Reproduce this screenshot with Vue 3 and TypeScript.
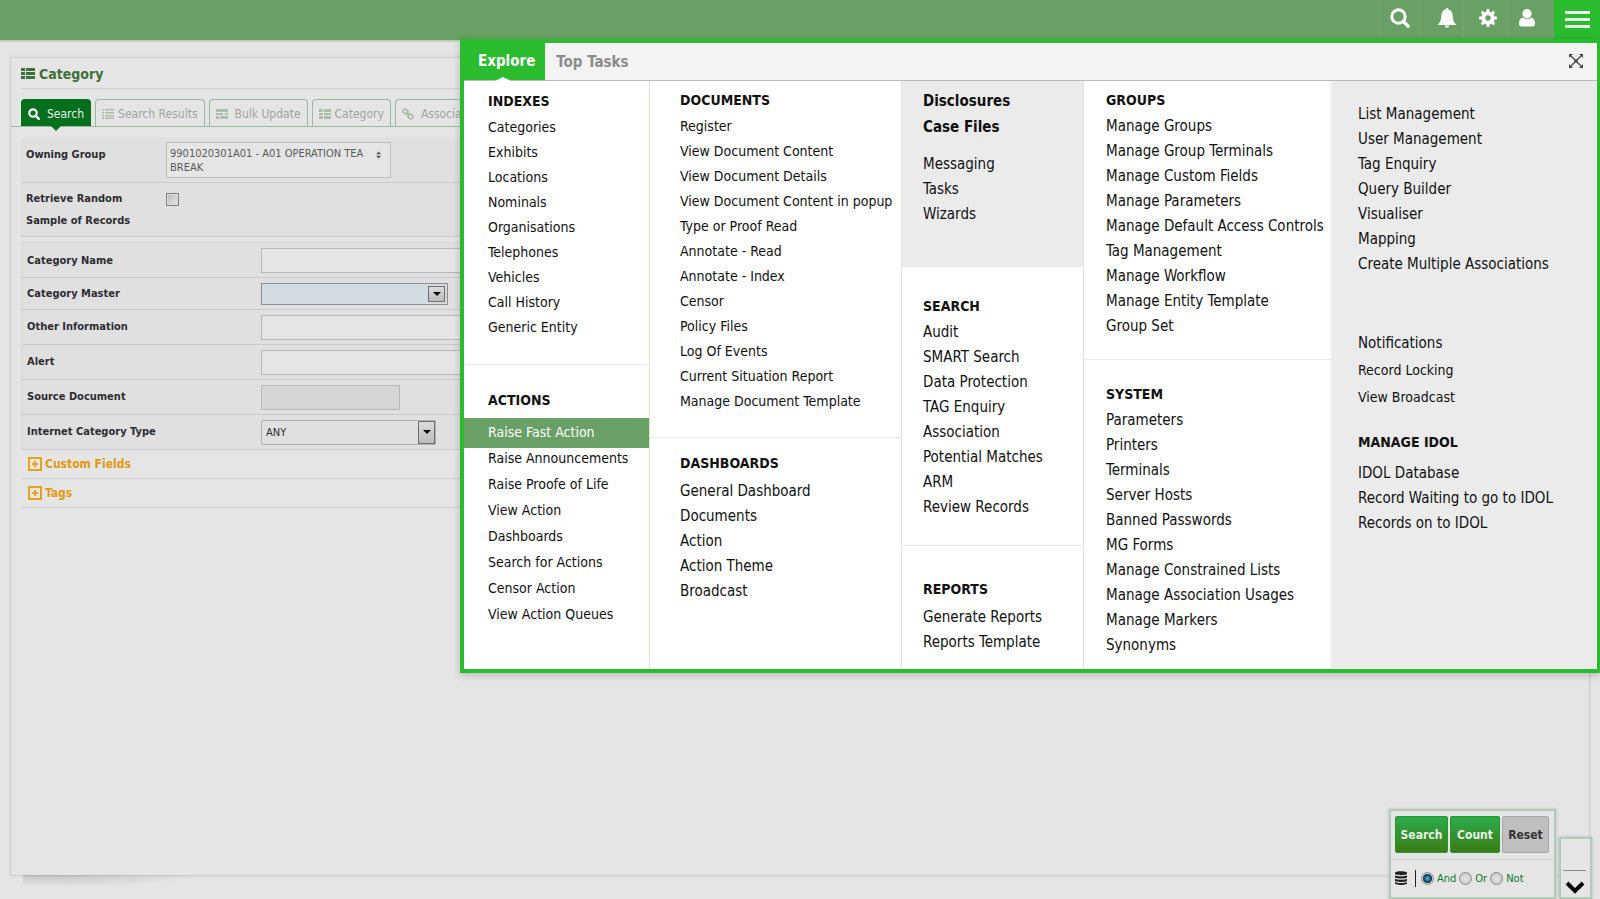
<script setup lang="ts">
import { ref } from 'vue'

interface Section {
  key: string
  title?: string
  items: string[]
}

const columns: { key: string; sections: Section[] }[] = [
  {
    key: 'one',
    sections: [
      {
        key: 'indexes',
        title: 'INDEXES',
        items: ['Categories', 'Exhibits', 'Locations', 'Nominals', 'Organisations', 'Telephones', 'Vehicles', 'Call History', 'Generic Entity'],
      },
      {
        key: 'actions',
        title: 'ACTIONS',
        items: ['Raise Fast Action', 'Raise Announcements', 'Raise Proofe of Life', 'View Action', 'Dashboards', 'Search for Actions', 'Censor Action', 'View Action Queues'],
      },
    ],
  },
  {
    key: 'two',
    sections: [
      {
        key: 'documents',
        title: 'DOCUMENTS',
        items: ['Register', 'View Document Content', 'View Document Details', 'View Document Content in popup', 'Type or Proof Read', 'Annotate - Read', 'Annotate - Index', 'Censor', 'Policy Files', 'Log Of Events', 'Current Situation Report', 'Manage Document Template'],
      },
      {
        key: 'dashboards',
        title: 'DASHBOARDS',
        items: ['General Dashboard', 'Documents', 'Action', 'Action Theme', 'Broadcast'],
      },
    ],
  },
  {
    key: 'three',
    sections: [
      { key: 'featured', items: ['Disclosures', 'Case Files', 'Messaging', 'Tasks', 'Wizards'] },
      {
        key: 'search',
        title: 'SEARCH',
        items: ['Audit', 'SMART Search', 'Data Protection', 'TAG Enquiry', 'Association', 'Potential Matches', 'ARM', 'Review Records'],
      },
      { key: 'reports', title: 'REPORTS', items: ['Generate Reports', 'Reports Template'] },
    ],
  },
  {
    key: 'four',
    sections: [
      {
        key: 'groups',
        title: 'GROUPS',
        items: ['Manage Groups', 'Manage Group Terminals', 'Manage Custom Fields', 'Manage Parameters', 'Manage Default Access Controls', 'Tag Management', 'Manage Workflow', 'Manage Entity Template', 'Group Set'],
      },
      {
        key: 'system',
        title: 'SYSTEM',
        items: ['Parameters', 'Printers', 'Terminals', 'Server Hosts', 'Banned Passwords', 'MG Forms', 'Manage Constrained Lists', 'Manage Association Usages', 'Manage Markers', 'Synonyms'],
      },
    ],
  },
  {
    key: 'five',
    sections: [
      {
        key: 'management',
        items: ['List Management', 'User Management', 'Tag Enquiry', 'Query Builder', 'Visualiser', 'Mapping', 'Create Multiple Associations'],
      },
      { key: 'notices', items: ['Notifications', 'Record Locking', 'View Broadcast'] },
      { key: 'idol', title: 'MANAGE IDOL', items: ['IDOL Database', 'Record Waiting to go to IDOL', 'Records on to IDOL'] },
    ],
  },
]

const activeItem = ref('Raise Fast Action')
const operator = ref('And')
const operators = ['And', 'Or', 'Not']
const randomSample = ref(false)
const categoryName = ref('')
const categoryMaster = ref('')
const otherInformation = ref('')
const alertText = ref('')
const sourceDocument = ref('')
const categoryType = ref('ANY')
</script>

<template>
  <div class="page">
    <header class="topbar">
      <button class="tool search-tool" type="button" aria-label="Search">
        <svg width="20" height="20" viewBox="0 0 20 20"><circle cx="8.5" cy="8.5" r="6.7" fill="none" stroke="#fff" stroke-width="3" /><path d="M13.5 13.5l4.7 4.7" stroke="#fff" stroke-width="3.4" stroke-linecap="round" /></svg>
      </button>
      <button class="tool bell-tool" type="button" aria-label="Alerts">
        <svg width="20" height="20" viewBox="0 0 20 20"><path d="M10 0c-1 0-1.5.6-1.5 1.500C5.500 2.200 4.400 4.800 4.300 8c-.1 4-1 6.500-3.800 9h19c-2.800-2.500-3.700-5-3.800-9-.1-3.200-1.200-5.800-4.200-6.500C11.500.6 11 0 10 0zM7.800 17.600h4.400c0 1.400-1 2.200-2.200 2.200s-2.200-.8-2.200-2.200z" fill="#fff" /></svg>
      </button>
      <button class="tool gear-tool" type="button" aria-label="Settings">
        <svg width="18" height="18" viewBox="0 0 18 18"><g fill="#fff"><g v-for="n in 4" :key="n" :transform="`rotate(${n * 45} 9 9)`"><path d="M7.300 3L7.800 0h2.400l.5 3v12l-.5 3H7.800l-.5-3z" /></g><circle cx="9" cy="9" r="6.600" /></g><circle cx="9" cy="9" r="2.700" fill="#69a065" /></svg>
      </button>
      <button class="tool user-tool" type="button" aria-label="Account">
        <svg width="16" height="18" viewBox="0 0 16 18"><path d="M8 0a4.600 4.600 0 0 1 4.600 4.800A4.600 4.600 0 0 1 8 9.500a4.600 4.600 0 0 1-4.600-4.700A4.600 4.600 0 0 1 8 0zM3.800 8.600A6 6 0 0 0 8 10.300a6 6 0 0 0 4.200-1.700c2.700.5 3.800 3 3.800 6.200 0 1.800-1 2.700-2.500 2.700h-11C1 17.500 0 16.600 0 14.800c0-3.200 1.100-5.700 3.800-6.200z" fill="#fff" /></svg>
      </button>
      <button class="burger" type="button" aria-label="Menu" aria-expanded="true"><i></i><i></i><i></i></button>
    </header>

    <main class="panel">
      <h1 class="title">
        <svg width="14" height="11" viewBox="0 0 14 11" fill="#3f6f3a"><path d="M0 0h4v3H0zM5 0h9v3H5zM0 4h4v3H0zM5 4h9v3H5zM0 8h4v3H0zM5 8h9v3H5z" /></svg>
        Category
      </h1>

      <nav class="tabs" aria-label="Category views">
        <a class="tab active" href="#search">
          <svg width="12" height="12" viewBox="0 0 12 12"><circle cx="5" cy="5" r="3.700" fill="none" stroke="#fff" stroke-width="2.200" /><path d="M7.800 7.800l3 3" stroke="#fff" stroke-width="2.400" stroke-linecap="round" /></svg>
          <span>Search</span>
        </a>
        <a class="tab tight" href="#results">
          <svg width="12" height="10" viewBox="0 0 12 10" fill="#a9bfa9"><path d="M0 0h2v1.500H0zM3 0h9v1.500H3zM0 3h2v1.500H0zM3 3h9v1.500H3zM0 6h2v1.500H0zM3 6h9v1.500H3zM0 8.500h2V10H0zM3 8.500h9V10H3z" /></svg>
          <span>Search Results</span>
        </a>
        <a class="tab" href="#bulk">
          <svg width="12" height="10" viewBox="0 0 12 10" fill="#a9bfa9"><path d="M0 0h12v3H0zM0 4h7v2H0zM9 4h3v2H9zM0 7h3v3H0zM4 7h8v3H4z" /></svg>
          <span>Bulk Update</span>
        </a>
        <a class="tab tight" href="#category">
          <svg width="12" height="10" viewBox="0 0 12 10" fill="#a9bfa9"><path d="M0 0h4v3H0zM5 0h7v3H5zM0 4h4v2H0zM5 4h7v2H5zM0 7h4v3H0zM5 7h7v3H5z" /></svg>
          <span>Category</span>
        </a>
        <a class="tab" href="#associations">
          <svg width="12" height="12" viewBox="0 0 12 12" fill="none" stroke="#a3b8a3" stroke-width="1.500"><rect x="1" y="1.500" width="5" height="4" rx="1.800" transform="rotate(35 3.500 3.500)" /><rect x="6" y="6.500" width="5" height="4" rx="1.800" transform="rotate(35 8.500 8.500)" /><path d="M4.500 4.500l3 3" /></svg>
          <span>Associations</span>
        </a>
      </nav>

      <form class="criteria" @submit.prevent>
        <div class="row owner">
          <span id="owner-label" class="label">Owning Group</span>
          <button class="owner-pick" type="button" aria-haspopup="listbox" aria-labelledby="owner-label">
            <span>9901020301A01 - A01 OPERATION TEA BREAK</span>
            <svg width="6" height="8" viewBox="0 0 6 8" fill="#555"><path d="M3 0l2.800 3.300H.2zM3 8L.2 4.700h5.600z" /></svg>
          </button>
        </div>
        <div class="row sample">
          <label class="label" for="sample">Retrieve Random Sample of Records</label>
          <input id="sample" v-model="randomSample" class="tick" type="checkbox" />
        </div>

        <div class="fields">
          <div class="row">
            <label class="label" for="name">Category Name</label>
            <input id="name" v-model="categoryName" class="box wide" type="text" />
          </div>
          <div class="row short">
            <label class="label" for="master">Category Master</label>
            <span class="drop master">
              <select id="master" v-model="categoryMaster"><option value=""></option></select>
              <i class="arrow"></i>
            </span>
          </div>
          <div class="row">
            <label class="label" for="other">Other Information</label>
            <input id="other" v-model="otherInformation" class="box wide" type="text" />
          </div>
          <div class="row">
            <label class="label" for="alert">Alert</label>
            <input id="alert" v-model="alertText" class="box wide" type="text" />
          </div>
          <div class="row">
            <label class="label" for="source">Source Document</label>
            <input id="source" v-model="sourceDocument" class="box locked" type="text" disabled />
          </div>
          <div class="row">
            <label class="label" for="type">Internet Category Type</label>
            <span class="drop kind">
              <select id="type" v-model="categoryType"><option>ANY</option></select>
              <i class="arrow"></i>
            </span>
          </div>
        </div>

        <button v-for="name in ['Custom Fields', 'Tags']" :key="name" class="expander" type="button" aria-expanded="false">
          <svg width="14" height="14" viewBox="0 0 14 14"><path d="M1 1h12v12H1z" fill="none" stroke="#e8a317" stroke-width="2" /><path d="M6 4h2v2h2v2H8v2H6V8H4V6h2z" fill="#e8a317" /></svg>
          {{ name }}
        </button>
      </form>
    </main>

    <aside class="mega" aria-label="Main menu">
      <div class="mega-head">
        <button class="mega-tab current" type="button">Explore</button>
        <button class="mega-tab" type="button">Top Tasks</button>
        <button class="close" type="button" aria-label="Close menu">
          <svg width="14" height="14" viewBox="0 0 14 14"><path d="M2 2l10 10M12 2L2 12" stroke="#555" stroke-width="1.500" /><path d="M0 0h4L0 4zM14 0v4l-4-4zM0 14v-4l4 4zM14 14h-4l4-4zM5.500 5.500h3v3h-3z" fill="#444" /></svg>
        </button>
      </div>
      <div class="mega-body">
        <div v-for="column in columns" :key="column.key" class="column" :class="column.key">
          <section v-for="section in column.sections" :key="section.key" class="section" :class="section.key">
            <h2 v-if="section.title">{{ section.title }}</h2>
            <ul>
              <li v-for="item in section.items" :key="item">
                <a href="#" :class="{ selected: item === activeItem }" @click.prevent="activeItem = item">{{ item }}</a>
              </li>
            </ul>
          </section>
        </div>
      </div>
    </aside>

    <div class="dock">
      <div class="search-box">
        <div class="buttons">
          <button class="go" type="button">Search</button>
          <button class="go" type="button">Count</button>
          <button class="reset" type="button">Reset</button>
        </div>
        <div class="logic">
          <svg class="db" width="12" height="14" viewBox="0 0 12 14" fill="#222"><path d="M0 1.800C0-.4 12-.4 12 1.800v1C12 4.600 0 4.600 0 2.800zM0 4.300c2 1.300 10 1.300 12 0v2c0 1.600-12 1.600-12 0zM0 7.700c2 1.300 10 1.300 12 0v2c0 1.600-12 1.600-12 0zM0 11c2 1.300 10 1.300 12 0v1.300c0 2.200-12 2.200-12 0z" /></svg>
          <i class="bar"></i>
          <label v-for="name in operators" :key="name"><input v-model="operator" type="radio" name="operator" :value="name" />{{ name }}</label>
        </div>
      </div>
      <div class="scroller">
        <button type="button" aria-label="Scroll down">
          <svg width="20" height="13" viewBox="0 0 20 13"><path d="M2 2l8 8 8-8" fill="none" stroke="#000" stroke-width="4" /></svg>
        </button>
      </div>
    </div>
  </div>
</template>

<style>
body {
  margin: 0;
  background: #e5e5e5;
}
</style>

<style scoped>
* {
  box-sizing: border-box;
}

.page {
  position: relative;
  z-index: 0;
  display: flex;
  flex-direction: column;
  min-height: 100vh;
  overflow: hidden;
  background: #e5e5e5;
  font-family: 'DejaVu Sans Condensed', 'DejaVu Sans', sans-serif;
  font-size: 11px;
  color: #2d2d33;
}

button,
input,
select {
  margin: 0;
  font: inherit;
  color: inherit;
}

button {
  padding: 0;
  border: 0;
  background: none;
}

a {
  color: inherit;
  text-decoration: none;
}

/* top bar */
.topbar {
  display: flex;
  justify-content: flex-end;
  height: 42px;
  background: #69a065;
  border-bottom: 2px solid #c5d0c0;
}

.tool {
  display: flex;
  align-items: center;
  justify-content: center;
  height: 39px;
  padding-bottom: 4px;
  border-left: 1px solid #76a972;
}

.search-tool {
  width: 40px;
}

.bell-tool,
.gear-tool {
  width: 44px;
}

.bell-tool {
  padding-left: 10px;
}

.gear-tool {
  padding-left: 4px;
}

.user-tool {
  width: 47px;
  padding-right: 8px;
}

.burger {
  display: flex;
  flex-direction: column;
  gap: 4px;
  width: 46px;
  height: 40px;
  padding: 11px 10px 0 11px;
  background: #2bbb2f;
}

.burger i {
  height: 3px;
  background: #e9f2e9;
}

/* page panel */
.panel {
  position: relative;
  flex: 1;
  margin: 15px 10px 23px;
  border: 1px solid #cfcfcf;
  box-shadow: 0 0 4px rgba(0, 0, 0, 0.06);
}

.panel::after {
  content: '';
  position: absolute;
  top: 100%;
  left: 12px;
  width: 180px;
  height: 12px;
  background: radial-gradient(ellipse at 15% 0, rgba(0, 0, 0, 0.14), transparent 70%);
}

.title {
  display: flex;
  align-items: center;
  gap: 4px;
  height: 31px;
  margin: 0 10px;
  padding-top: 1px;
  border-bottom: 1px solid #d2d2d2;
  font-size: 14px;
  color: #3f6f3a;
}

.tabs {
  display: flex;
  gap: 4px;
  height: 38px;
  padding: 10px 0 0 10px;
  border-bottom: 1px solid #93bd9c;
  white-space: nowrap;
}

.tab {
  position: relative;
  display: flex;
  align-items: center;
  gap: 7px;
  padding: 2px 6px 0;
  border: 1px solid #93bd9c;
  border-bottom: 0;
  border-radius: 4px 4px 0 0;
  font-size: 12px;
  color: #a3a3a3;
}

.tab.tight {
  gap: 4px;
}

.tab.active {
  background: #04701d;
  border-color: #04701d;
  color: #e8efe8;
}

.tab.active::after {
  content: '';
  position: absolute;
  top: 100%;
  left: 50%;
  margin-left: -5px;
  border: 5px solid transparent;
  border-top-color: #04701d;
}

.criteria {
  margin: 10px 10px 0;
}

.row {
  display: flex;
  align-items: center;
  height: 35px;
  border-bottom: 1px solid #c9c9d2;
  background: #e0e0e0;
}

.short {
  height: 32px;
}

.owner {
  height: 46px;
}

.sample {
  height: 54px;
}

.label {
  flex: none;
  width: 239px;
  padding-left: 5px;
  font-weight: bold;
  line-height: 22px;
}

.owner .label,
.sample .label {
  width: 145px;
  padding-right: 20px;
}

.owner .label {
  margin-bottom: 10px;
}

.owner-pick {
  display: flex;
  align-items: flex-start;
  justify-content: space-between;
  width: 225px;
  height: 36px;
  padding: 4px 9px 0 3px;
  border: 1px solid #bdbdbd;
  background: #e5e5e5;
  line-height: 14px;
  text-align: left;
  color: #5b5b5b;
}

.owner-pick svg {
  margin-top: 4px;
}

.tick {
  appearance: none;
  align-self: flex-start;
  width: 13px;
  height: 13px;
  margin-top: 10px;
  border: 1px solid #7f7f7f;
  box-shadow: inset 0 0 0 1px #dcdcdc;
  background: linear-gradient(135deg, #bdbdbd, #e6e6e6);
}

.fields {
  margin-top: 5px;
  border-top: 1px solid #d5d5d5;
  border-left: 1px solid #d5d5d5;
}

.fields .row:first-child {
  padding-top: 1px;
}

.box {
  height: 25px;
  border: 1px solid #b8b8b8;
  background: #e5e5e5;
}

.wide {
  width: 360px;
}

.locked {
  width: 139px;
  background: #d6d6d6;
}

.drop {
  display: flex;
  align-items: stretch;
}

.drop select {
  appearance: none;
  width: 100%;
  padding: 0 4px;
  border: 0;
  border-radius: 0;
  background: transparent;
}

.arrow {
  display: flex;
  flex: none;
  align-items: center;
  justify-content: center;
  width: 17px;
  border: 1px solid #707070;
  background: linear-gradient(#dcdcdc, #bcbcbc);
  pointer-events: none;
}

.arrow::after {
  content: '';
  border: 4px solid transparent;
  border-top-color: #000;
  border-bottom: 0;
}

.master {
  width: 187px;
  height: 22px;
  padding: 2px;
  border: 1px solid #8a8f92;
  background: #d2dce2;
}

.kind {
  width: 175px;
  height: 25px;
  border: 1px solid #b0b0b0;
  border-radius: 2px;
}

.expander {
  display: flex;
  align-items: center;
  gap: 3px;
  width: 100%;
  height: 29px;
  padding-left: 7px;
  border-bottom: 1px solid #cfcfd2;
  font-size: 12px;
  font-weight: bold;
  color: #e39a10;
}

/* mega menu */
.mega {
  position: absolute;
  top: 39px;
  right: 0;
  width: 71.25%;
  border: 4px solid #2bbb2f;
  border-right-width: 3px;
  background: #fff;
  box-shadow: 0 2px 8px rgba(0, 0, 0, 0.2);
  color: #111;
}

.mega-head {
  display: flex;
  height: 38px;
  border-bottom: 1px solid #b9b9b9;
  background: #f3f3f3;
}

.mega-tab {
  position: relative;
  padding: 0 11px;
  font-size: 15px;
  font-weight: bold;
  color: #8c8c8c;
}

.mega-tab.current {
  padding: 0 10px 2px 14px;
  background: #2bbb2f;
  color: #fff;
}

.mega-tab.current::after {
  content: '';
  position: absolute;
  bottom: -1px;
  left: 50%;
  margin-left: -10px;
  border: 8px solid transparent;
  border-top: 0;
  border-bottom: 4px solid #fff;
}

.close {
  margin-left: auto;
  padding: 0 14px 2px;
  line-height: 0;
}

.mega-body {
  display: grid;
  grid-template-columns: 186fr 252fr 182fr 248fr 265fr;
  min-height: 588px;
  overflow: hidden;
}

.column {
  border-right: 1px solid #d9e8d0;
  font-size: 14px;
  line-height: 25px;
  white-space: nowrap;
}

.section + .section {
  border-top: 1px solid #e2efdc;
}

.section {
  padding: 0 0 0 24px;
}

h2 {
  margin: 0;
  font-size: 14px;
  line-height: 27px;
}

ul {
  margin: 0;
  padding: 0;
  list-style: none;
}

li a {
  display: block;
}

.indexes {
  padding-top: 7px;
  padding-bottom: 24px;
}

.actions {
  padding-top: 22px;
  padding-left: 0;
  line-height: 26px;
}

.actions h2,
.actions a {
  padding-left: 24px;
}

.actions h2 {
  margin-bottom: 4px;
}

.actions .selected {
  height: 30px;
  margin-bottom: -3px;
  background: #69a065;
  color: #fff;
  line-height: 28px;
}

.two .section {
  padding-left: 30px;
}

.documents {
  padding-top: 6px;
  padding-bottom: 23px;
}

.dashboards {
  padding-top: 12px;
}

.three .section {
  padding-left: 21px;
}

.featured {
  height: 186px;
  padding-top: 7px;
  background: #ebebeb;
}

.featured li:nth-child(-n + 2) {
  font-size: 15px;
  font-weight: bold;
  line-height: 26px;
}

.featured li:nth-child(2) {
  margin-bottom: 12px;
}

.section.search {
  padding-top: 26px;
  padding-bottom: 25px;
  border-top: 0;
}

.reports {
  padding-top: 30px;
}

.four .section {
  padding-left: 22px;
}

.groups {
  padding-top: 6px;
  padding-bottom: 20px;
}

.system {
  padding-top: 21px;
}

.four {
  border-right: 0;
  font-size: 15px;
}

.dashboards,
.three {
  font-size: 15px;
}

.five {
  border-right: 0;
  background: #ebebeb;
  box-shadow: -1px 0 3px #ebebeb;
  font-size: 15px;
}

.five .section {
  padding-left: 26px;
  border-top: 0;
}

.management {
  padding-top: 21px;
}

.notices {
  padding-top: 53px;
  line-height: 27px;
}

.notices li + li {
  font-size: 14px;
}

.idol {
  padding-top: 18px;
}

.dashboards h2,
.reports h2 {
  margin-bottom: 2px;
}

.idol h2 {
  margin-bottom: 5px;
}

/* floating controls */
.dock {
  position: absolute;
  right: 8px;
  bottom: 0;
  display: flex;
  align-items: flex-end;
  gap: 3px;
}

.search-box,
.scroller {
  border: 2px solid #b4cab8;
  background: #e5e5e5;
  box-shadow: 0 0 3px rgba(0, 0, 0, 0.2);
}

.search-box {
  width: 167px;
  height: 90px;
}

.buttons {
  display: grid;
  grid-template-columns: 53fr 50fr 47fr;
  gap: 2px;
  height: 49px;
  padding: 5px 5px 6px 4px;
  border-bottom: 1px solid #cfcfcf;
}

.buttons button {
  border: 1px solid #25962c;
  border-radius: 2px;
  background: linear-gradient(#2daa4c, #3a7d14);
  font-size: 12px;
  font-weight: bold;
  color: #e8f0e8;
}

.buttons .reset {
  border-color: #a8a8a8;
  background: #bfbfbf;
  color: #333;
}

.logic {
  display: flex;
  align-items: center;
  height: 37px;
  padding: 0 4px 1px;
  color: #0b7a2c;
}

.bar {
  width: 1px;
  height: 17px;
  margin: 0 5px 0 8px;
  background: #222;
}

.logic label {
  display: flex;
  align-items: center;
  gap: 3px;
  margin-right: 3px;
}

.logic input {
  appearance: none;
  width: 13px;
  height: 13px;
  border: 1px solid #8b8b8b;
  border-radius: 50%;
  background: radial-gradient(#e5e5e5, #bfbfbf);
}

.logic input:checked {
  background: radial-gradient(#6fb4d8 0, #17517a 40%, #17405c 55%, #d5dade 65%);
}

.scroller {
  display: flex;
  align-items: flex-end;
  width: 33px;
  height: 62px;
  padding: 0 4px 0 2px;
}

.scroller button {
  width: 100%;
  height: 27px;
  padding-top: 6px;
  border-top: 1px solid #8a8a8a;
  line-height: 0;
}
</style>
